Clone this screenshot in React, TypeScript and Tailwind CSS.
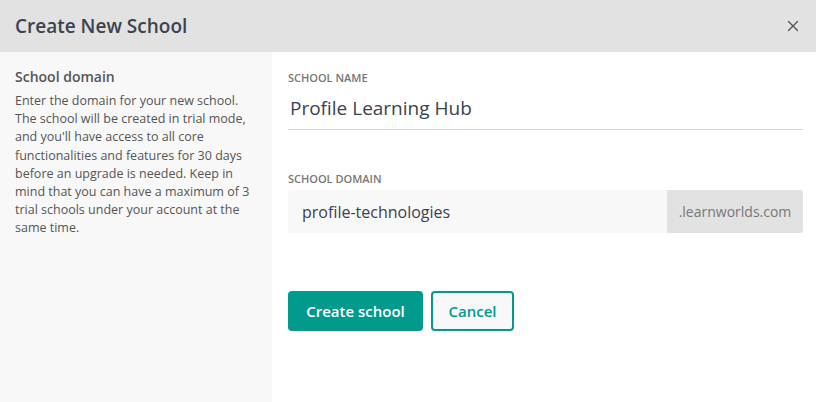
import { X } from "lucide-react";

export default function App() {
  return (
    <div
      className="flex h-[402px] w-[816px] flex-col bg-white"
      style={{ fontFamily: '"Segoe UI", "Open Sans", sans-serif' }}
    >
      {/* Header */}
      <div className="flex h-[52px] shrink-0 items-center justify-between bg-[#e2e2e2] pr-[14px] pl-[15px]">
        <h1 className="text-[19px] font-semibold text-[#3b4250]">Create New School</h1>
        <X className="h-[18px] w-[18px] text-[#555]" strokeWidth={1.8} />
      </div>

      <div className="flex flex-1">
        {/* Sidebar */}
        <div className="w-[272px] shrink-0 bg-[#f8f8f8] pt-[15px] pr-3 pl-[15px]">
          <h2 className="text-[14px] font-semibold leading-[20px] text-[#555]">School domain</h2>
          <p className="mt-[5px] text-[12.5px] leading-[18.2px] text-[#555]">
            Enter the domain for your new school. The school will be created in trial mode, and
            you'll have access to all core functionalities and features for 30 days before an
            upgrade is needed. Keep in mind that you can have a maximum of 3 trial schools under
            your account at the same time.
          </p>
        </div>

        {/* Form */}
        <div className="flex-1 pt-[18px] pr-[13px] pl-[16px]">
          <label className="block text-[11px] font-semibold leading-[16px] text-[#777]">
            SCHOOL NAME
          </label>
          <div className="border-b border-[#d5d7dc] pt-[8px] pb-[7px] pl-[2px] text-[19px] leading-[28px] text-[#3b4250]">
            Profile Learning Hub
          </div>

          <label className="mt-[41px] block text-[11px] font-semibold leading-[16px] text-[#777]">
            SCHOOL DOMAIN
          </label>
          <div className="mt-[3px] flex h-[43px] overflow-hidden rounded-[3px] bg-[#f8f8f8]">
            <div className="flex flex-1 items-center pl-[14px] text-[16px] text-[#3b4250]">
              profile-technologies
            </div>
            <div className="flex w-[136px] items-center justify-center bg-[#e2e2e2] text-[14px] text-[#777]">
              .learnworlds.com
            </div>
          </div>

          <div className="mt-[58px] flex gap-2">
            <button className="h-[40px] w-[135px] rounded-[4px] bg-[#009b8d] text-[15px] font-semibold text-white">
              Create school
            </button>
            <button className="h-[40px] w-[83px] rounded-[4px] border-2 border-[#009b8d] bg-[#f8f8f8] text-[15px] font-semibold text-[#009b8d]">
              Cancel
            </button>
          </div>
        </div>
      </div>
    </div>
  );
}
